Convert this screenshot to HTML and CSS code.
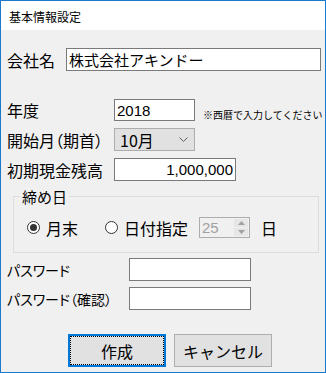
FILE: index.html
```html
<!DOCTYPE html>
<html lang="ja">
<head>
    <meta charset="UTF-8">
    <title>基本情報設定</title>
    <link rel="stylesheet" href="styles.css">
</head>
<body>
    <div class="window">
        <div class="titlebar">基本情報設定</div>
        <form class="dialog">
            <div class="row row-company">
                <label class="lbl lbl-company">会社名</label>
                <input class="field field-company" type="text" value="株式会社アキンドー">
            </div>
            <div class="row row-year">
                <label class="lbl lbl-wide">年度</label>
                <input class="field field-year" type="text" value="2018">
                <span class="note">※西暦で入力してください</span>
            </div>
            <div class="row row-month">
                <label class="lbl lbl-wide">開始月（期首）</label>
                <div class="combo">
                    <span class="combo-text">10月</span>
                    <svg class="combo-arrow" width="9" height="5" viewBox="0 0 9 5"><polyline points="0.5,0.5 4.5,4.5 8.5,0.5" fill="none" stroke="#606060" stroke-width="1"/></svg>
                </div>
            </div>
            <div class="row row-cash">
                <label class="lbl lbl-wide">初期現金残高</label>
                <input class="field field-cash" type="text" value="1,000,000">
            </div>
            <fieldset class="group">
                <legend class="group-title">締め日</legend>
                <div class="radio-row">
                    <label class="radio"><input type="radio" name="close" checked><span>月末</span></label>
                    <label class="radio radio-date"><input type="radio" name="close"><span>日付指定</span></label>
                    <div class="spin">
                        <span class="spin-text">25</span>
                        <div class="spin-buttons">
                            <span class="spin-btn"><svg width="7" height="4" viewBox="0 0 7 4"><polygon points="3.5,0 7,4 0,4" fill="#a0a0a0"/></svg></span>
                            <span class="spin-btn"><svg width="7" height="4" viewBox="0 0 7 4"><polygon points="0,0 7,0 3.5,4" fill="#a0a0a0"/></svg></span>
                        </div>
                    </div>
                    <span class="day">日</span>
                </div>
            </fieldset>
            <div class="row row-pass">
                <label class="lbl lbl-pass">パスワード</label>
                <input class="field field-pass" type="password">
            </div>
            <div class="row row-pass2">
                <label class="lbl lbl-pass">パスワード（確認）</label>
                <input class="field field-pass" type="password">
            </div>
            <div class="buttons">
                <button type="button" class="btn btn-default">作成</button>
                <button type="button" class="btn">キャンセル</button>
            </div>
        </form>
    </div>
</body>
</html>
```

FILE: styles.css
```css
html, body {
    margin: 0;
    padding: 0;
}
body {
    width: 326px;
    height: 373px;
    overflow: hidden;
    font-family: "Noto Sans CJK JP", "Liberation Sans", sans-serif;
    color: #000;
}
.window {
    width: 326px;
    height: 373px;
    box-sizing: border-box;
    border: 1px solid #1979ca;
    background-color: #f0f0f0;
    overflow: hidden;
}
.titlebar {
    height: 29px;
    background-color: #fff;
    font-size: 12px;
    line-height: 31px;
    padding-left: 8px;
}
.dialog {
    margin: 0;
    padding: 0 0 0 6px;
}
.row {
    display: flex;
    align-items: center;
}
.lbl {
    font-size: 16px;
    line-height: 20px;
    white-space: nowrap;
    flex: none;
    font-feature-settings: "palt";
}
.lbl-company {
    width: 59px;
}
.lbl-wide {
    width: 107px;
}
.lbl-pass {
    width: 122px;
    font-size: 14px;
}
.field {
    box-sizing: border-box;
    height: 23px;
    border: 1px solid #7a7a7a;
    background-color: #fff;
    margin: 0;
    padding: 0 2px;
    font-family: "Liberation Sans", "Noto Sans CJK JP", sans-serif;
    font-size: 15px;
    color: #000;
    outline: none;
    flex: none;
}
.row-company {
    margin-top: 18px;
}
.field-company {
    width: 255px;
    font-family: "Noto Sans CJK JP", sans-serif;
    font-size: 15px;
}
.row-year {
    margin-top: 28px;
    height: 22px;
    align-items: flex-end;
}
.row-year .lbl {
    align-self: center;
}
.field-year {
    width: 81px;
    height: 22px;
}
.note {
    font-size: 10px;
    line-height: 12px;
    margin-left: 8px;
    white-space: nowrap;
}
.row-month {
    margin-top: 7px;
}
.combo {
    box-sizing: border-box;
    width: 81px;
    height: 23px;
    border: 1px solid #adadad;
    background-color: #e1e1e1;
    display: flex;
    align-items: center;
    justify-content: space-between;
    padding: 0 6px 0 5px;
    flex: none;
}
.combo-text {
    font-size: 16px;
    line-height: 20px;
}
.row-cash {
    margin-top: 7px;
}
.field-cash {
    width: 122px;
    text-align: right;
}
.group {
    box-sizing: border-box;
    width: 306px;
    height: 64px;
    margin: 8px 0 0 6px;
    padding: 0;
    border: 1px solid #dcdcdc;
}
.group-title {
    font-size: 15px;
    line-height: 15px;
    margin-left: 6px;
    padding: 0 2px;
}
.radio-row {
    display: flex;
    align-items: center;
    margin-top: 13px;
    padding-left: 13px;
}
.radio {
    display: flex;
    align-items: center;
    font-size: 16px;
    line-height: 20px;
}
.radio input {
    appearance: none;
    -webkit-appearance: none;
    box-sizing: border-box;
    width: 13px;
    height: 13px;
    margin: 0 6px 0 0;
    border: 1px solid #333;
    border-radius: 50%;
    background-color: #fff;
    position: relative;
}
.radio input:checked::after {
    content: "";
    position: absolute;
    left: 2px;
    top: 2px;
    width: 7px;
    height: 7px;
    border-radius: 50%;
    background-color: #333;
}
.radio-date {
    margin-left: 27px;
}
.spin {
    box-sizing: border-box;
    width: 51px;
    height: 21px;
    margin-left: 11px;
    border: 1px solid #adadad;
    display: flex;
    align-items: center;
    justify-content: space-between;
    padding: 0 1px 0 2px;
}
.spin-text {
    font-family: "Liberation Sans", sans-serif;
    font-size: 15px;
    color: #a0a0a0;
}
.spin-buttons {
    display: flex;
    flex-direction: column;
    gap: 1px;
}
.spin-btn {
    width: 14px;
    height: 8px;
    background-color: #e6e6e6;
    display: flex;
    align-items: center;
    justify-content: center;
}
.day {
    font-size: 16px;
    line-height: 20px;
    margin-left: 11px;
}
.row-pass {
    margin-top: 5px;
}
.row-pass2 {
    margin-top: 6px;
}
.field-pass {
    width: 122px;
}
.buttons {
    display: flex;
    gap: 8px;
    margin: 24px 0 0 61px;
}
.btn {
    box-sizing: border-box;
    width: 98px;
    height: 33px;
    border: 1px solid #adadad;
    background-color: #e1e1e1;
    font-family: "Noto Sans CJK JP", sans-serif;
    font-size: 16px;
    color: #000;
    padding: 0;
}
.btn-default {
    border: 2px solid #0078d7;
    outline: 1px dotted #000;
    outline-offset: -3px;
}
```
